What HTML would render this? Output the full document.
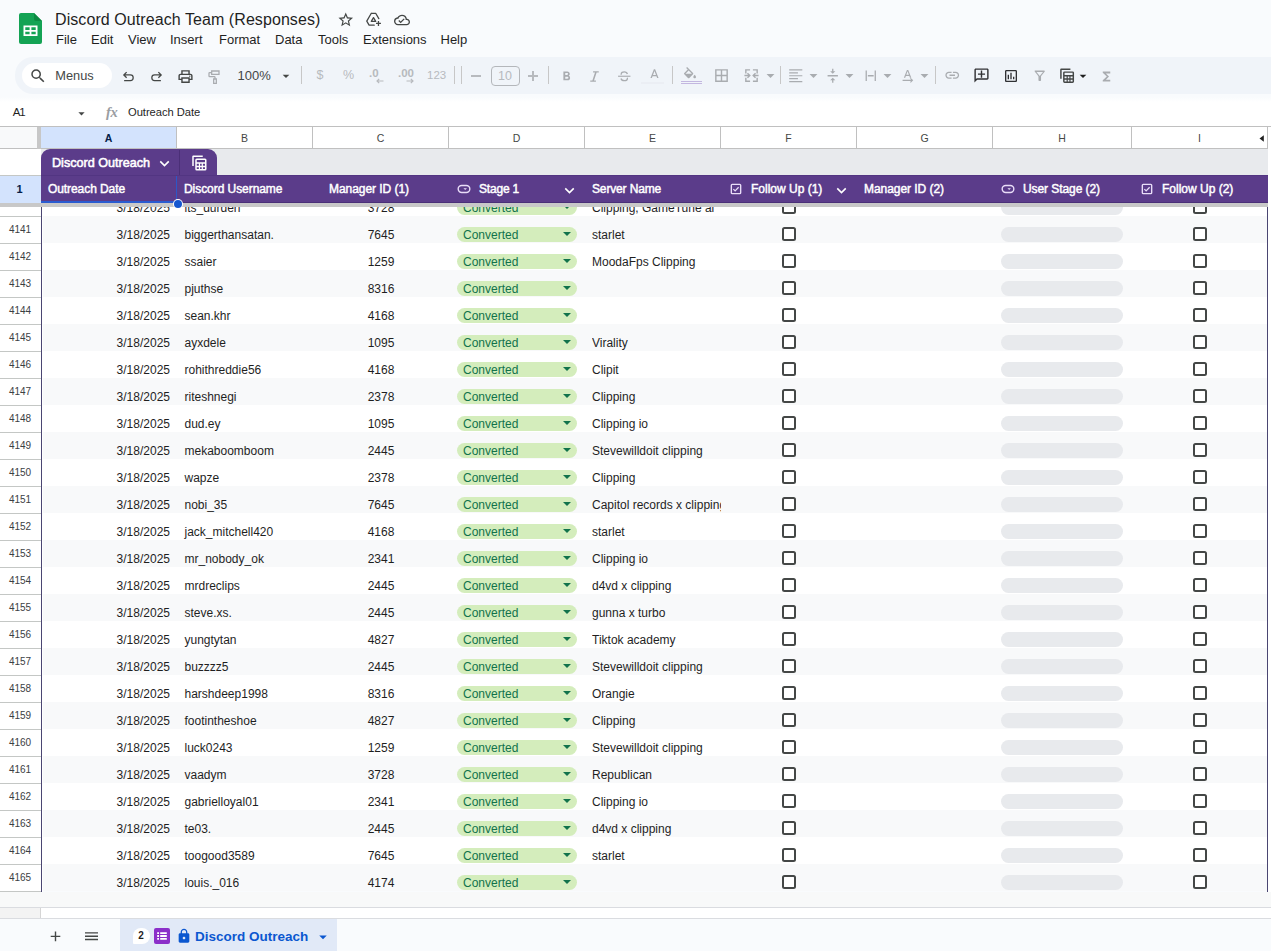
<!DOCTYPE html>
<html><head><meta charset="utf-8"><title>Discord Outreach Team (Responses)</title>
<style>
*{box-sizing:border-box;margin:0;padding:0}
html,body{width:1271px;height:951px;overflow:hidden}
body{position:relative;background:#f9fbfd;font-family:"Liberation Sans",sans-serif;color:#1f1f1f}
.abs{position:absolute}
svg{display:block;position:absolute;overflow:visible}
/* ---------- header ---------- */
#title{position:absolute;left:55px;top:10px;font-size:16px;line-height:20px;color:#1f1f1f;white-space:nowrap;letter-spacing:.075px}
.menu{position:absolute;top:32px;font-size:13px;line-height:16px;color:#1f1f1f;white-space:nowrap}
/* ---------- toolbar ---------- */
#toolbar{position:absolute;left:14.500px;top:57px;width:1300px;height:36.500px;border-radius:18px;background:#f0f4f9}
#menus{position:absolute;left:22px;top:63px;width:90px;height:25px;border-radius:12.500px;background:#fff}
.tsep{position:absolute;top:66px;width:1px;height:18px;background:#c7c7c7}
.ttxt{position:absolute;white-space:nowrap}
/* ---------- formula bar ---------- */
#fbar{position:absolute;left:0;top:95px;width:1271px;height:31px;background:linear-gradient(#f9fbfd 0,#f9fbfd 2px,#fff 7px)}
/* ---------- column headers ---------- */
#colhdr{position:absolute;left:0;top:126px;width:1268px;height:23px;background:#fff;border-top:1px solid #c0c0c0;border-bottom:1px solid #c0c0c0}
.ch{position:absolute;top:0;height:21px;border-right:1px solid #c0c0c0;font-size:10.5px;line-height:22px;text-align:center;color:#444746}
/* ---------- grid ---------- */
.r{position:absolute;left:42px;width:1226px;height:27px;background:#fff}
.r.alt{background:#f8f9fa}
.c{position:absolute;top:12px;height:15px;font-size:12px;line-height:15px;color:#1f1f1f;white-space:nowrap}
.c.a{left:0;width:128px;text-align:right}
.c.b{left:142.500px}
.c.cc{left:271px;width:136px;text-align:center}
.c.e{left:550px;width:129px;overflow:hidden}
.chip{position:absolute;top:11px;height:14.500px;border-radius:8px}
.chip.g{left:415px;width:119.500px;background:#d4edbc}
.chip.h{left:959px;width:122px;background:#e8eaed}
.ct{position:absolute;left:6px;top:.500px;font-size:12px;line-height:15px;color:#11734b;white-space:nowrap}
.dd{position:absolute;left:106px;top:5px;width:0;height:0;border-left:4px solid transparent;border-right:4px solid transparent;border-top:4.5px solid #11734b}
.cb{position:absolute;top:11px;width:14px;height:14px;border:2px solid #444746;border-radius:2.500px;background:#fff}
.cb.f{left:739.500px}
.cb.i{left:1150.500px}
#rowhdr{position:absolute;left:0;top:0;width:41px;height:0}
.rh{position:absolute;left:0;width:41px;height:27px;background:#fff;border-bottom:1px solid #c4c7c5;font-size:10px;line-height:26px;text-align:center;color:#3c4043;padding-right:1px}
.ch.sel{background:#d3e3fd;color:#041e49;font-weight:700}
.htxt{position:absolute;font-size:12px;font-weight:400;line-height:16px;color:#fff;white-space:nowrap;-webkit-text-stroke:.45px #fff}

</style></head>
<body>
<svg style="left:19px;top:13px" width="23" height="31" viewBox="0 0 23 31">
<path d="M2 0h13l8 8v21a2 2 0 0 1-2 2H2a2 2 0 0 1-2-2V2a2 2 0 0 1 2-2z" fill="#14a354"/>
<path d="M15 0l8 8h-6a2 2 0 0 1-2-2z" fill="#0c8a43"/>
<path d="M4.500 12.500h14v10.500h-14zM6.300 14.300v2.600h4.300v-2.600zM12.400 14.300v2.600h4.300v-2.600zM6.300 18.700v2.600h4.300v-2.600zM12.400 18.700v2.600h4.300v-2.600z" fill="#fff" fill-rule="evenodd"/>
</svg>
<div id="title">Discord Outreach Team (Responses)</div>
<svg style="left:336.55px;top:11.25px;color:#444746" width="17.5" height="17.5" viewBox="0 0 24 24"><path d="M22 9.240l-7.190-.62L12 2 9.190 8.630 2 9.240l5.460 4.730L5.820 21 12 17.270 18.180 21l-1.630-7.030L22 9.240zM12 15.400l-3.760 2.270 1-4.280-3.320-2.880 4.380-.38L12 6.100l1.710 4.040 4.380.38-3.320 2.880 1 4.280L12 15.400z" fill="currentColor"/></svg><svg style="left:365px;top:11px;color:#444746" width="17" height="17" viewBox="0 0 24 24"><path d="M8.700 3.500h6.600l4.200 7.300M8.700 3.500L2.500 14.300 5.800 20h7.200M8.700 3.500M12 9.300l-3.100 5.400h6.200z" fill="none" stroke="currentColor" stroke-width="1.800" stroke-linejoin="round" stroke-linecap="round"/><path d="M19 14v7M15.500 17.500h7" fill="none" stroke="currentColor" stroke-width="1.800"/></svg><svg style="left:394px;top:12px;color:#444746" width="16" height="16" viewBox="0 0 24 24"><path d="M19.350 10.040A7.490 7.490 0 0 0 12 4C9.110 4 6.600 5.640 5.350 8.040A5.994 5.994 0 0 0 0 14c0 3.310 2.690 6 6 6h13c2.760 0 5-2.240 5-5 0-2.640-2.050-4.780-4.650-4.960zM19 18H6c-2.210 0-4-1.790-4-4s1.790-4 4-4h.71C7.370 7.690 9.480 6 12 6c3.040 0 5.500 2.460 5.500 5.500v.5H19c1.660 0 3 1.340 3 3s-1.340 3-3 3zm-9-3.820l-2.090-2.090L6.500 13.500 10 17l6.010-6.010-1.410-1.410z" fill="currentColor"/></svg><div class="menu" style="left:56px">File</div><div class="menu" style="left:91px">Edit</div><div class="menu" style="left:128px">View</div><div class="menu" style="left:170px">Insert</div><div class="menu" style="left:219px">Format</div><div class="menu" style="left:275px">Data</div><div class="menu" style="left:318px">Tools</div><div class="menu" style="left:363px">Extensions</div><div class="menu" style="left:440.5px">Help</div><div id="toolbar"></div><div id="menus"></div>
<svg style="left:29.3px;top:67px;color:#444746" width="18" height="18" viewBox="0 0 24 24"><path d="M15.5 14h-.79l-.28-.27A6.47 6.47 0 0 0 16 9.5 6.5 6.5 0 1 0 9.5 16c1.61 0 3.09-.59 4.23-1.57l.27.28v.79l5 4.99L20.49 19l-4.99-5zm-6 0C7.01 14 5 11.99 5 9.5S7.01 5 9.5 5 14 7.01 14 9.5 11.99 14 9.5 14z" fill="currentColor"/></svg><div class="ttxt" style="left:55.300px;top:67px;font-size:12.800px;line-height:17px;color:#444746">Menus</div><svg style="left:120.5px;top:68.5px;color:#444746" width="15" height="15" viewBox="0 0 24 24"><path d="M9 5L4.500 9.500 9 14M5 9.500h10a4.500 4.500 0 0 1 0 9H5" fill="none" stroke="currentColor" stroke-width="2" /></svg><svg style="left:149px;top:68.5px;color:#444746" width="15" height="15" viewBox="0 0 24 24"><path d="M15 5l4.500 4.500L15 14M19 9.500H9a4.500 4.500 0 0 0 0 9h10" fill="none" stroke="currentColor" stroke-width="2" /></svg><svg style="left:177.2px;top:67.5px;color:#444746" width="17" height="17" viewBox="0 0 24 24"><path d="M19 8h-1V3H6v5H5c-1.66 0-3 1.34-3 3v6h4v4h12v-4h4v-6c0-1.66-1.34-3-3-3zM8 5h8v3H8V5zm8 12v2H8v-4h8v2zm2-2v-2H6v2H4v-4c0-.55.45-1 1-1h14c.55 0 1 .45 1 1v4h-2z" fill="currentColor"/><circle cx="18" cy="11.5" r="1" fill="currentColor"/></svg><svg style="left:205.5px;top:68.5px;color:#a9acb0" width="16" height="16" viewBox="0 0 24 24"><path d="M8.500 3h11v5h-11zM8.500 5.500H5.500a1 1 0 0 0-1 1V10.500a1 1 0 0 0 1 1H12.500a1 1 0 0 1 1 1V15M11.500 15h4v6.500h-4z" fill="none" stroke="currentColor" stroke-width="1.900"/></svg><div class="ttxt" style="left:237.500px;top:67px;font-size:13px;line-height:17px;color:#444746">100%</div><svg style="left:277.5px;top:68px;color:#444746" width="16" height="16" viewBox="0 0 24 24"><path d="M7 10l5 5 5-5z" fill="currentColor"/></svg><div class="tsep" style="left:301px"></div><div class="tsep" style="left:454px"></div><div class="tsep" style="left:461px"></div><div class="tsep" style="left:548px"></div><div class="tsep" style="left:672px"></div><div class="tsep" style="left:780px"></div><div class="tsep" style="left:935px"></div><div class="ttxt" style="left:315px;top:67px;width:10px;text-align:center;font-size:12.500px;line-height:17px;color:#b7babe">$</div><div class="ttxt" style="left:342px;top:67px;width:13px;text-align:center;font-size:12.500px;line-height:17px;color:#b7babe">%</div><div class="ttxt" style="left:369px;top:65px;font-size:11.500px;font-weight:700;line-height:17px;color:#b7babe">.0</div><svg style="left:376px;top:78px;color:#b7babe" width="8" height="6" viewBox="0 0 8 6"><path d="M7.500 3H1.200M3.200 .8L1 3l2.200 2.200" fill="none" stroke="currentColor" stroke-width="1.200"/></svg><div class="ttxt" style="left:398px;top:65px;font-size:11.500px;font-weight:700;line-height:17px;color:#b7babe">.00</div><svg style="left:406px;top:78px;color:#b7babe" width="8" height="6" viewBox="0 0 8 6"><path d="M.500 3h6.300M4.800 .8L7 3 4.800 5.200" fill="none" stroke="currentColor" stroke-width="1.200"/></svg><div class="ttxt" style="left:427px;top:67px;font-size:11.500px;line-height:17px;color:#b7babe">123</div><div class="abs" style="left:471px;top:75px;width:10px;height:1.500px;background:#b7babe"></div><div class="abs" style="left:490.500px;top:65.500px;width:29px;height:20px;border:1px solid #b4b7bb;border-radius:4px;font-size:12.500px;line-height:18px;text-align:center;color:#b7babe">10</div><div class="abs" style="left:528px;top:75px;width:10px;height:1.500px;background:#b7babe"></div><div class="abs" style="left:532.250px;top:70.750px;width:1.500px;height:10px;background:#b7babe"></div><svg style="left:559px;top:68.5px;color:#a9acb0" width="15" height="15" viewBox="0 0 24 24"><path d="M15.6 10.79c.97-.67 1.65-1.77 1.65-2.79 0-2.26-1.75-4-4-4H7v14h7.04c2.09 0 3.71-1.7 3.71-3.79 0-1.52-.86-2.82-2.15-3.42zM10 6.5h3c.83 0 1.5.67 1.5 1.5s-.67 1.5-1.5 1.5h-3v-3zm3.5 9H10v-3h3.5c.83 0 1.5.67 1.5 1.5s-.67 1.5-1.5 1.5z" fill="currentColor"/></svg><svg style="left:586.2px;top:67.5px;color:#a9acb0" width="17" height="17" viewBox="0 0 24 24"><path d="M10 4.500v1.900h2.700l-3.700 11.200H6v1.900h8v-1.900h-2.700l3.700-11.200H18V4.500z" fill="currentColor"/></svg><svg style="left:616.25px;top:67.75px;color:#a9acb0" width="16.5" height="16.5" viewBox="0 0 24 24"><path d="M3 12h18" fill="none" stroke="currentColor" stroke-width="1.700"/><path d="M16.600 8.700c-.5-2-2.200-3.200-4.600-3.200-2.600 0-4.400 1.300-4.400 3.200 0 .4.100.8.200 1.100M7.300 15.300c.5 2 2.300 3.200 4.700 3.200 2.700 0 4.600-1.300 4.600-3.200 0-.4-.100-.8-.200-1.100" fill="none" stroke="currentColor" stroke-width="1.900"/></svg><svg style="left:646.5px;top:67.5px;color:#a9acb0" width="15" height="15" viewBox="0 0 24 24"><path d="M11 3L5.5 17h2.25l1.12-3h6.25l1.12 3h2.25L13 3h-2zm-1.38 9L12 5.67 14.38 12H9.62z" fill="currentColor" transform="translate(0 -1)"/></svg><div class="abs" style="left:641px;top:82px;width:23px;height:2px;background:#ebeef4"></div><svg style="left:682.3px;top:66.8px;color:#a9acb0" width="16" height="16" viewBox="0 0 24 24"><path d="M16.56 8.94L7.62 0 6.21 1.41l2.38 2.38-5.15 5.15a1.49 1.49 0 0 0 0 2.12l5.5 5.5c.29.29.68.44 1.06.44s.77-.15 1.06-.44l5.5-5.5c.59-.58.59-1.53 0-2.12zM5.21 10L10 5.21 14.79 10H5.21zM19 11.5s-2 2.17-2 3.5c0 1.1.9 2 2 2s2-.9 2-2c0-1.33-2-3.5-2-3.5z" fill="currentColor"/></svg><div class="abs" style="left:681px;top:81px;width:21px;height:1px;background:#c3b7e0"></div><div class="abs" style="left:681px;top:83px;width:21px;height:1px;background:#c3b7e0"></div><svg style="left:713px;top:66.8px;color:#a9acb0" width="17" height="17" viewBox="0 0 24 24"><path d="M3 3v18h18V3H3zm8 16H5v-6h6v6zm0-8H5V5h6v6zm8 8h-6v-6h6v6zm0-8h-6V5h6v6z" fill="currentColor"/></svg><svg style="left:743px;top:66.8px;color:#a9acb0" width="17" height="17" viewBox="0 0 24 24"><path d="M3 3h7v2H5v4H3zM14 3h7v6h-2V5h-5zM3 15h2v4h5v2H3zM19 15h2v6h-7v-2h5zM2 11h5.2L5.6 9.4 7 8l4 4-4 4-1.4-1.4L7.2 13H2zM22 11h-5.200L18.400 9.400 17 8l-4 4 4 4 1.400-1.400L16.800 13H22z" fill="currentColor"/></svg><svg style="left:761.3px;top:65.7px;color:#a9acb0" width="19" height="19" viewBox="0 0 24 24"><path d="M7 10l5 5 5-5z" fill="currentColor"/></svg><svg style="left:787.45px;top:67.05px;color:#a9acb0" width="17.5" height="17.5" viewBox="0 0 24 24"><path d="M3 3.200h18v1.600H3zM3 7.200h12v1.600H3zM3 11.200h18v1.600H3zM3 15.200h12v1.600H3zM3 19.200h18v1.600H3z" fill="currentColor"/></svg><svg style="left:803.5px;top:65.7px;color:#a9acb0" width="19" height="19" viewBox="0 0 24 24"><path d="M7 10l5 5 5-5z" fill="currentColor"/></svg><svg style="left:825.25px;top:67.55px;color:#a9acb0" width="15.5" height="15.5" viewBox="0 0 24 24"><path d="M8 19h3v4h2v-4h3l-4-4-4 4zm8-14h-3V1h-2v4H8l4 4 4-4zM4 11v2h16v-2H4z" fill="currentColor"/></svg><svg style="left:840.2px;top:65.7px;color:#a9acb0" width="19" height="19" viewBox="0 0 24 24"><path d="M7 10l5 5 5-5z" fill="currentColor"/></svg><svg style="left:862.75px;top:67.55px;color:#a9acb0" width="15.5" height="15.5" viewBox="0 0 24 24"><path d="M4 4h2v16H4zM18 4h2v16h-2zM7.500 11h9v2h-9z" fill="currentColor"/></svg><svg style="left:877.5px;top:65.7px;color:#a9acb0" width="19" height="19" viewBox="0 0 24 24"><path d="M7 10l5 5 5-5z" fill="currentColor"/></svg><svg style="left:900.05px;top:67.55px;color:#a9acb0" width="15.5" height="15.5" viewBox="0 0 24 24"><path d="M10.750 3L6 15h2.100l.95-2.600h5.400l.95 2.600h2.100L12.750 3h-2zm-1 7.600L11.750 5.200l2 5.400h-4zM4 18.200h13.200l-1.700-1.700 1.200-1.200 3.800 3.800-3.800 3.800-1.200-1.200 1.700-1.700H4z" fill="currentColor"/></svg><svg style="left:914.8px;top:65.7px;color:#a9acb0" width="19" height="19" viewBox="0 0 24 24"><path d="M7 10l5 5 5-5z" fill="currentColor"/></svg><svg style="left:944.25px;top:67.25px;color:#a9acb0" width="16.5" height="16.5" viewBox="0 0 24 24"><path d="M3.9 12c0-1.71 1.39-3.1 3.1-3.1h4V7H7c-2.76 0-5 2.24-5 5s2.24 5 5 5h4v-1.900H7c-1.710 0-3.100-1.390-3.100-3.100zM8 13h8v-2H8v2zm9-6h-4v1.900h4c1.710 0 3.100 1.390 3.100 3.100s-1.390 3.100-3.100 3.100h-4V17h4c2.760 0 5-2.240 5-5s-2.240-5-5-5z" fill="currentColor"/></svg><svg style="left:973.3px;top:67.3px;color:#303134" width="17" height="17" viewBox="0 0 24 24"><g transform="translate(24 0) scale(-1 1)"><path d="M22 4c0-1.100-.9-2-2-2H4c-1.100 0-2 .9-2 2v12c0 1.100.9 2 2 2h14l4 4V4zm-2 13.170L18.830 16H4V4h16v13.170zM13 5h-2v4H7v2h4v4h2v-4h4V9h-4z" fill="currentColor"/></g></svg><svg style="left:1002.5px;top:67.5px;color:#303134" width="16" height="16" viewBox="0 0 24 24"><path d="M19 3H5c-1.100 0-2 .9-2 2v14c0 1.100.9 2 2 2h14c1.100 0 2-.9 2-2V5c0-1.100-.9-2-2-2zm0 16H5V5h14v14zM7 10h2v7H7zm4-3h2v10h-2zm4 6h2v4h-2z" fill="currentColor"/></svg><svg style="left:1031.75px;top:67.75px;color:#a9acb0" width="15.5" height="15.5" viewBox="0 0 24 24"><path d="M7 6h10l-5.010 6.300L7 6zm-2.750-.39C6.270 8.200 10 13 10 13v6c0 .55.45 1 1 1h2c.55 0 1-.45 1-1v-6s3.720-4.800 5.740-7.390A.998.998 0 0 0 18.950 4H5.040c-.83 0-1.300.95-.79 1.610z" fill="currentColor"/></svg><svg style="left:1057.55px;top:67.25px;color:#444746" width="17.5" height="17.5" viewBox="0 0 24 24"><path d="M4 2h13v2H5v12H3V4a2 2 0 0 1 1-2z" fill="currentColor"/><path d="M9 6h11a2 2 0 0 1 2 2v12a2 2 0 0 1-2 2H9a2 2 0 0 1-2-2V8a2 2 0 0 1 2-2zm0 2v3h11V8zm0 5v2.500h2.800V13zm4.400 0v2.500h2.200V13zm3.800 0v2.500H20V13zM9 17.500V20h2.800v-2.500zm4.400 0V20h2.200v-2.500zm3.800 0V20H20v-2.500z" fill="currentColor" fill-rule="evenodd"/></svg><svg style="left:1075px;top:68px;color:#1f1f1f" width="16" height="16" viewBox="0 0 24 24"><path d="M7 10l5 5 5-5z" fill="currentColor"/></svg><svg style="left:1099px;top:68.5px;color:#a9acb0" width="15" height="15" viewBox="0 0 24 24"><path d="M18 4H6v2l6.500 6L6 18v2h12v-3h-7l5-5-5-5h7z" fill="currentColor"/></svg><div id="fbar"></div><div class="ttxt" style="left:12.700px;top:104px;font-size:11.500px;line-height:16px;color:#1f1f1f;letter-spacing:-1px">A1</div><svg style="left:73.5px;top:105.5px;color:#444746" width="15" height="15" viewBox="0 0 24 24"><path d="M7 10l5 5 5-5z" fill="currentColor"/></svg><div class="ttxt" style="left:106px;top:103px;font-family:'Liberation Serif',serif;font-style:italic;font-size:14.500px;font-weight:700;line-height:18px;color:#9a9da2;letter-spacing:-.3px">fx</div><div class="ttxt" style="left:128px;top:104px;font-size:11.200px;line-height:16px;color:#1f1f1f;letter-spacing:-.05px">Outreach Date</div><div class="abs" style="left:0;top:126px;width:1271px;height:1px;background:#c0c0c0"></div><div class="abs" style="left:1268px;top:127px;width:3px;height:781px;background:#fff"></div><div id="colhdr"><div class="abs" style="left:0;top:0;width:37px;height:21px;background:#f8f9fa"></div><div class="abs" style="left:37px;top:0;width:4px;height:22px;background:#c7c7c7"></div><div class="ch sel" style="left:41px;width:136px">A</div><div class="ch" style="left:177px;width:136px">B</div><div class="ch" style="left:313px;width:136px">C</div><div class="ch" style="left:449px;width:136px">D</div><div class="ch" style="left:585px;width:136px">E</div><div class="ch" style="left:721px;width:136px">F</div><div class="ch" style="left:857px;width:136px">G</div><div class="ch" style="left:993px;width:139px">H</div><div class="ch" style="left:1132px;width:136px">I</div></div><svg style="left:1258.500px;top:135px" width="5" height="7" viewBox="0 0 5 7"><path d="M4.800 .2v6.600L.5 3.500z" fill="#1f1f1f"/></svg><div class="r" style="top:189px"><span class="c a">3/18/2025</span><span class="c b">its_durden</span><span class="c cc">3728</span><span class="chip g"><span class="ct">Converted</span><i class="dd"></i></span><span class="c e">Clipping, GameTune ai</span><i class="cb f"></i><span class="chip h"></span><i class="cb i"></i></div>
<div class="r alt" style="top:216px"><span class="c a">3/18/2025</span><span class="c b">biggerthansatan.</span><span class="c cc">7645</span><span class="chip g"><span class="ct">Converted</span><i class="dd"></i></span><span class="c e">starlet</span><i class="cb f"></i><span class="chip h"></span><i class="cb i"></i></div>
<div class="r" style="top:243px"><span class="c a">3/18/2025</span><span class="c b">ssaier</span><span class="c cc">1259</span><span class="chip g"><span class="ct">Converted</span><i class="dd"></i></span><span class="c e">MoodaFps Clipping</span><i class="cb f"></i><span class="chip h"></span><i class="cb i"></i></div>
<div class="r alt" style="top:270px"><span class="c a">3/18/2025</span><span class="c b">pjuthse</span><span class="c cc">8316</span><span class="chip g"><span class="ct">Converted</span><i class="dd"></i></span><span class="c e"></span><i class="cb f"></i><span class="chip h"></span><i class="cb i"></i></div>
<div class="r" style="top:297px"><span class="c a">3/18/2025</span><span class="c b">sean.khr</span><span class="c cc">4168</span><span class="chip g"><span class="ct">Converted</span><i class="dd"></i></span><span class="c e"></span><i class="cb f"></i><span class="chip h"></span><i class="cb i"></i></div>
<div class="r alt" style="top:324px"><span class="c a">3/18/2025</span><span class="c b">ayxdele</span><span class="c cc">1095</span><span class="chip g"><span class="ct">Converted</span><i class="dd"></i></span><span class="c e">Virality</span><i class="cb f"></i><span class="chip h"></span><i class="cb i"></i></div>
<div class="r" style="top:351px"><span class="c a">3/18/2025</span><span class="c b">rohithreddie56</span><span class="c cc">4168</span><span class="chip g"><span class="ct">Converted</span><i class="dd"></i></span><span class="c e">Clipit</span><i class="cb f"></i><span class="chip h"></span><i class="cb i"></i></div>
<div class="r alt" style="top:378px"><span class="c a">3/18/2025</span><span class="c b">riteshnegi</span><span class="c cc">2378</span><span class="chip g"><span class="ct">Converted</span><i class="dd"></i></span><span class="c e">Clipping</span><i class="cb f"></i><span class="chip h"></span><i class="cb i"></i></div>
<div class="r" style="top:405px"><span class="c a">3/18/2025</span><span class="c b">dud.ey</span><span class="c cc">1095</span><span class="chip g"><span class="ct">Converted</span><i class="dd"></i></span><span class="c e">Clipping io</span><i class="cb f"></i><span class="chip h"></span><i class="cb i"></i></div>
<div class="r alt" style="top:432px"><span class="c a">3/18/2025</span><span class="c b">mekaboomboom</span><span class="c cc">2445</span><span class="chip g"><span class="ct">Converted</span><i class="dd"></i></span><span class="c e">Stevewilldoit clipping</span><i class="cb f"></i><span class="chip h"></span><i class="cb i"></i></div>
<div class="r" style="top:459px"><span class="c a">3/18/2025</span><span class="c b">wapze</span><span class="c cc">2378</span><span class="chip g"><span class="ct">Converted</span><i class="dd"></i></span><span class="c e">Clipping</span><i class="cb f"></i><span class="chip h"></span><i class="cb i"></i></div>
<div class="r alt" style="top:486px"><span class="c a">3/18/2025</span><span class="c b">nobi_35</span><span class="c cc">7645</span><span class="chip g"><span class="ct">Converted</span><i class="dd"></i></span><span class="c e">Capitol records x clipping</span><i class="cb f"></i><span class="chip h"></span><i class="cb i"></i></div>
<div class="r" style="top:513px"><span class="c a">3/18/2025</span><span class="c b">jack_mitchell420</span><span class="c cc">4168</span><span class="chip g"><span class="ct">Converted</span><i class="dd"></i></span><span class="c e">starlet</span><i class="cb f"></i><span class="chip h"></span><i class="cb i"></i></div>
<div class="r alt" style="top:540px"><span class="c a">3/18/2025</span><span class="c b">mr_nobody_ok</span><span class="c cc">2341</span><span class="chip g"><span class="ct">Converted</span><i class="dd"></i></span><span class="c e">Clipping io</span><i class="cb f"></i><span class="chip h"></span><i class="cb i"></i></div>
<div class="r" style="top:567px"><span class="c a">3/18/2025</span><span class="c b">mrdreclips</span><span class="c cc">2445</span><span class="chip g"><span class="ct">Converted</span><i class="dd"></i></span><span class="c e">d4vd x clipping</span><i class="cb f"></i><span class="chip h"></span><i class="cb i"></i></div>
<div class="r alt" style="top:594px"><span class="c a">3/18/2025</span><span class="c b">steve.xs.</span><span class="c cc">2445</span><span class="chip g"><span class="ct">Converted</span><i class="dd"></i></span><span class="c e">gunna x turbo</span><i class="cb f"></i><span class="chip h"></span><i class="cb i"></i></div>
<div class="r" style="top:621px"><span class="c a">3/18/2025</span><span class="c b">yungtytan</span><span class="c cc">4827</span><span class="chip g"><span class="ct">Converted</span><i class="dd"></i></span><span class="c e">Tiktok academy</span><i class="cb f"></i><span class="chip h"></span><i class="cb i"></i></div>
<div class="r alt" style="top:648px"><span class="c a">3/18/2025</span><span class="c b">buzzzz5</span><span class="c cc">2445</span><span class="chip g"><span class="ct">Converted</span><i class="dd"></i></span><span class="c e">Stevewilldoit clipping</span><i class="cb f"></i><span class="chip h"></span><i class="cb i"></i></div>
<div class="r" style="top:675px"><span class="c a">3/18/2025</span><span class="c b">harshdeep1998</span><span class="c cc">8316</span><span class="chip g"><span class="ct">Converted</span><i class="dd"></i></span><span class="c e">Orangie</span><i class="cb f"></i><span class="chip h"></span><i class="cb i"></i></div>
<div class="r alt" style="top:702px"><span class="c a">3/18/2025</span><span class="c b">footintheshoe</span><span class="c cc">4827</span><span class="chip g"><span class="ct">Converted</span><i class="dd"></i></span><span class="c e">Clipping</span><i class="cb f"></i><span class="chip h"></span><i class="cb i"></i></div>
<div class="r" style="top:729px"><span class="c a">3/18/2025</span><span class="c b">luck0243</span><span class="c cc">1259</span><span class="chip g"><span class="ct">Converted</span><i class="dd"></i></span><span class="c e">Stevewilldoit clipping</span><i class="cb f"></i><span class="chip h"></span><i class="cb i"></i></div>
<div class="r alt" style="top:756px"><span class="c a">3/18/2025</span><span class="c b">vaadym</span><span class="c cc">3728</span><span class="chip g"><span class="ct">Converted</span><i class="dd"></i></span><span class="c e">Republican</span><i class="cb f"></i><span class="chip h"></span><i class="cb i"></i></div>
<div class="r" style="top:783px"><span class="c a">3/18/2025</span><span class="c b">gabrielloyal01</span><span class="c cc">2341</span><span class="chip g"><span class="ct">Converted</span><i class="dd"></i></span><span class="c e">Clipping io</span><i class="cb f"></i><span class="chip h"></span><i class="cb i"></i></div>
<div class="r alt" style="top:810px"><span class="c a">3/18/2025</span><span class="c b">te03.</span><span class="c cc">2445</span><span class="chip g"><span class="ct">Converted</span><i class="dd"></i></span><span class="c e">d4vd x clipping</span><i class="cb f"></i><span class="chip h"></span><i class="cb i"></i></div>
<div class="r" style="top:837px"><span class="c a">3/18/2025</span><span class="c b">toogood3589</span><span class="c cc">7645</span><span class="chip g"><span class="ct">Converted</span><i class="dd"></i></span><span class="c e">starlet</span><i class="cb f"></i><span class="chip h"></span><i class="cb i"></i></div>
<div class="r alt" style="top:864px"><span class="c a">3/18/2025</span><span class="c b">louis._016</span><span class="c cc">4174</span><span class="chip g"><span class="ct">Converted</span><i class="dd"></i></span><span class="c e"></span><i class="cb f"></i><span class="chip h"></span><i class="cb i"></i></div>
<div class="rh" style="top:190px">4140</div><div class="rh" style="top:217px">4141</div><div class="rh" style="top:244px">4142</div><div class="rh" style="top:271px">4143</div><div class="rh" style="top:298px">4144</div><div class="rh" style="top:325px">4145</div><div class="rh" style="top:352px">4146</div><div class="rh" style="top:379px">4147</div><div class="rh" style="top:406px">4148</div><div class="rh" style="top:433px">4149</div><div class="rh" style="top:460px">4150</div><div class="rh" style="top:487px">4151</div><div class="rh" style="top:514px">4152</div><div class="rh" style="top:541px">4153</div><div class="rh" style="top:568px">4154</div><div class="rh" style="top:595px">4155</div><div class="rh" style="top:622px">4156</div><div class="rh" style="top:649px">4157</div><div class="rh" style="top:676px">4158</div><div class="rh" style="top:703px">4159</div><div class="rh" style="top:730px">4160</div><div class="rh" style="top:757px">4161</div><div class="rh" style="top:784px">4162</div><div class="rh" style="top:811px">4163</div><div class="rh" style="top:838px">4164</div><div class="rh" style="top:865px">4165</div>
<div class="abs" style="left:42px;top:207px;width:1px;height:685px;background:#fff"></div><div class="abs" style="left:41px;top:207px;width:1px;height:685px;background:#4a4672"></div><div class="abs" style="left:1267px;top:207px;width:1px;height:685px;background:#4a4672"></div><div class="abs" style="left:0;top:892px;width:1271px;height:16px;background:#f8f9f9"></div><div class="abs" style="left:0;top:907px;width:1271px;height:1px;background:#dadce0"></div><div class="abs" style="left:0;top:908px;width:1271px;height:10px;background:#fff"></div><div class="abs" style="left:0;top:908px;width:41px;height:10px;background:#f3f3f3;border-right:1px solid #d5d5d5"></div><div class="abs" style="left:0;top:918px;width:1271px;height:1px;background:#dadce0"></div><div class="abs" style="left:0;top:149px;width:41px;height:26px;background:#fff"></div><div class="abs" style="left:41px;top:149px;width:1227px;height:26px;background:#e8eaed"></div><div class="abs" style="left:41px;top:149px;width:176px;height:27px;background:#5b3c8a;border-radius:9px 9px 0 0"></div><div class="abs" style="left:179px;top:150px;width:1px;height:25px;background:#4b2f77"></div><div class="htxt" style="left:52px;top:155px;font-size:12.600px;-webkit-text-stroke:.55px #fff">Discord Outreach</div><svg style="left:156px;top:155px;color:#fff" width="17" height="17" viewBox="0 0 24 24"><path d="M6 9l6 6 6-6" fill="none" stroke="currentColor" stroke-width="2.200"/></svg><svg style="left:190px;top:154px;color:#fff" width="18" height="18" viewBox="0 0 24 24"><path d="M4 2h13v2H5v12H3V4a2 2 0 0 1 1-2z" fill="currentColor"/><path d="M9 6h11a2 2 0 0 1 2 2v12a2 2 0 0 1-2 2H9a2 2 0 0 1-2-2V8a2 2 0 0 1 2-2zm0 2v3h11V8zm0 5v2.500h2.800V13zm4.400 0v2.500h2.200V13zm3.800 0v2.500H20V13zM9 17.500V20h2.800v-2.500zm4.400 0V20h2.200v-2.500zm3.800 0V20H20v-2.500z" fill="currentColor" fill-rule="evenodd"/></svg><div class="abs" style="left:0;top:175px;width:41px;height:1px;background:#c4c7c5"></div><div class="abs" style="left:0;top:176px;width:41px;height:27px;background:#d3e3fd;font-size:11px;font-weight:700;line-height:27px;text-align:center;color:#041e49;padding-right:2px">1</div><div class="abs" style="left:41px;top:175px;width:1227px;height:28px;background:#5b3c8a"></div><div class="abs" style="left:41px;top:175px;width:1227px;height:1px;background:#523582"></div><div class="abs" style="left:177px;top:202px;width:1091px;height:1px;background:#4a2f78"></div><div class="htxt" style="left:48px;top:181px;letter-spacing:-0.08px">Outreach Date</div><div class="htxt" style="left:184px;top:181px;letter-spacing:-0.06px">Discord Username</div><div class="htxt" style="left:329px;top:181px;letter-spacing:-0.05px">Manager ID (1)</div><div class="htxt" style="left:479px;top:181px;letter-spacing:-0.2px">Stage 1</div><div class="htxt" style="left:592px;top:181px;letter-spacing:-0.15px">Server Name</div><div class="htxt" style="left:751px;top:181px;letter-spacing:0px">Follow Up (1)</div><div class="htxt" style="left:864px;top:181px;letter-spacing:-0.05px">Manager ID (2)</div><div class="htxt" style="left:1023px;top:181px;letter-spacing:-0.08px">User Stage (2)</div><div class="htxt" style="left:1162px;top:181px;letter-spacing:0px">Follow Up (2)</div><svg style="left:456.5px;top:182px;color:#e9ddf8" width="14" height="14" viewBox="0 0 24 24"><rect x="2" y="6" width="20" height="12" rx="6" fill="none" stroke="currentColor" stroke-width="2.400"/><path d="M11 10.500l3 3.200 3-3.200z" fill="currentColor"/></svg><svg style="left:1000.5px;top:182px;color:#e9ddf8" width="14" height="14" viewBox="0 0 24 24"><rect x="2" y="6" width="20" height="12" rx="6" fill="none" stroke="currentColor" stroke-width="2.400"/><path d="M11 10.500l3 3.200 3-3.200z" fill="currentColor"/></svg><svg style="left:728.5px;top:182.3px;color:#e9ddf8" width="14" height="14" viewBox="0 0 24 24"><rect x="4" y="4" width="16" height="16" rx="1.500" fill="none" stroke="currentColor" stroke-width="2.400"/><path d="M7.500 12.200l3 3 6-6.200" fill="none" stroke="currentColor" stroke-width="2.200"/></svg><svg style="left:1139.5px;top:182.3px;color:#e9ddf8" width="14" height="14" viewBox="0 0 24 24"><rect x="4" y="4" width="16" height="16" rx="1.500" fill="none" stroke="currentColor" stroke-width="2.400"/><path d="M7.500 12.200l3 3 6-6.200" fill="none" stroke="currentColor" stroke-width="2.200"/></svg><svg style="left:561px;top:181.5px;color:#fff" width="17" height="17" viewBox="0 0 24 24"><path d="M6 9l6 6 6-6" fill="none" stroke="currentColor" stroke-width="2.200"/></svg><svg style="left:833px;top:181.5px;color:#fff" width="17" height="17" viewBox="0 0 24 24"><path d="M6 9l6 6 6-6" fill="none" stroke="currentColor" stroke-width="2.200"/></svg><div class="abs" style="left:41px;top:201px;width:136px;height:2px;background:#2a5bd0"></div><div class="abs" style="left:176px;top:176px;width:1px;height:27px;background:#2d57c6"></div><div class="abs" style="left:0;top:203px;width:1268px;height:4px;background:#c8c8c8"></div><div class="abs" style="left:173.500px;top:199.500px;width:8px;height:8px;border-radius:50%;background:#1557cf;box-shadow:0 0 0 1px #fff"></div><div class="abs" style="left:0;top:919px;width:1271px;height:32px;background:#f9fbfd"></div><svg style="left:50px;top:931px" width="11" height="11" viewBox="0 0 11 11"><path d="M.700 5.400h9.600M5.500 .600v9.600" fill="none" stroke="#444746" stroke-width="1.400"/></svg><svg style="left:85px;top:931px" width="13" height="11" viewBox="0 0 13 11"><path d="M0 1.900h13M0 5.200h13M0 8.500h13" fill="none" stroke="#444746" stroke-width="1.400"/></svg><div class="abs" style="left:120px;top:919px;width:217px;height:32px;background:#e1e9f7"></div><div class="abs" style="left:132.500px;top:927.500px;width:17px;height:16px;background:#fff;border-radius:8px 8px 8px 1px;font-size:10px;font-weight:700;line-height:16px;text-align:center;color:#1f1f1f">2</div><svg style="left:154px;top:928px" width="16" height="16" viewBox="0 0 16 16"><rect width="16" height="16" rx="2" fill="#8b2fc9"/><path d="M3.200 4.200h1.800v1.800H3.200zM6.200 4.200h6.600v1.800H6.200zM3.200 7.100h1.800v1.800H3.200zM6.200 7.100h6.600v1.800H6.200zM3.200 10h1.800v1.800H3.200zM6.200 10h6.600v1.800H6.200z" fill="#fff"/></svg><svg style="left:175.5px;top:928px;color:#0b57d0" width="16" height="16" viewBox="0 0 24 24"><path d="M18 8h-1V6c0-2.760-2.240-5-5-5S7 3.240 7 6v2H6c-1.100 0-2 .9-2 2v10c0 1.100.9 2 2 2h12c1.100 0 2-.9 2-2V10c0-1.100-.9-2-2-2zm-6 9c-1.100 0-2-.9-2-2s.9-2 2-2 2 .9 2 2-.9 2-2 2zm3.100-9H8.900V6c0-1.710 1.390-3.100 3.100-3.100 1.710 0 3.100 1.390 3.100 3.100v2z" fill="currentColor"/></svg><div class="ttxt" style="left:195px;top:928px;font-size:13.500px;font-weight:700;line-height:18px;color:#0b57d0">Discord Outreach</div><svg style="left:313.5px;top:927.7px;color:#0b57d0" width="18" height="18" viewBox="0 0 24 24"><path d="M7 10l5 5 5-5z" fill="currentColor"/></svg>
</body></html>
